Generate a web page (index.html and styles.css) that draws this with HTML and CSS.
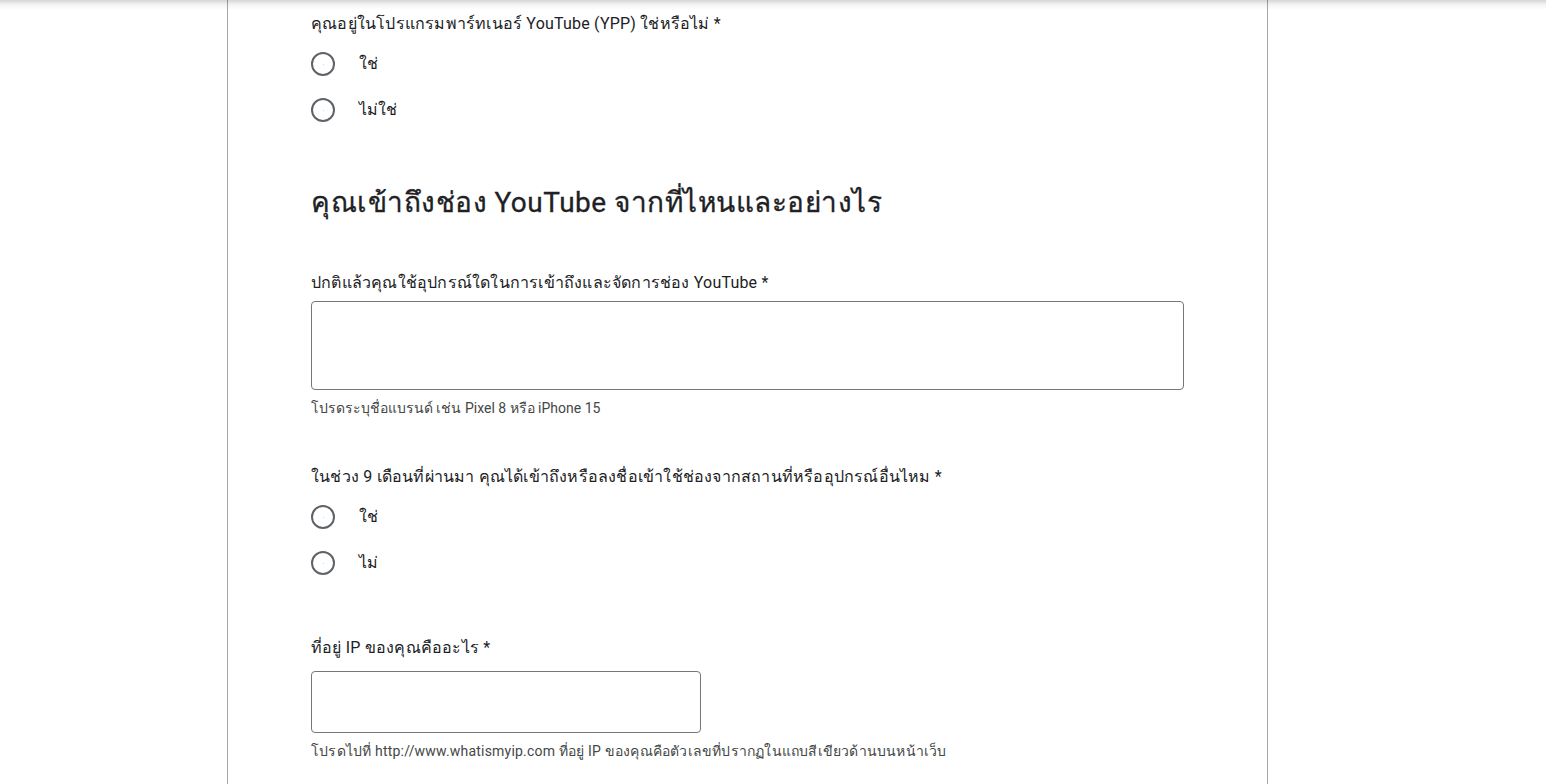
FILE: index.html
```html
<!DOCTYPE html>
<html lang="th">
<head>
<meta charset="utf-8">
<title>Form</title>
<link rel="stylesheet" href="styles.css">
</head>
<body>
<div class="topshadow"></div>
<main class="card">
  <section class="q q-first">
    <div class="q-label">คุณอยู่ในโปรแกรมพาร์ทเนอร์ YouTube (YPP) ใช่หรือไม่ *</div>
    <div class="options">
      <div class="opt"><span class="radio"></span><span class="opt-text">ใช่</span></div>
      <div class="opt"><span class="radio"></span><span class="opt-text">ไม่ใช่</span></div>
    </div>
  </section>

  <h2 class="section-title">คุณเข้าถึงช่อง YouTube จากที่ไหนและอย่างไร</h2>

  <section class="q q-after-title">
    <div class="q-label">ปกติแล้วคุณใช้อุปกรณ์ใดในการเข้าถึงและจัดการช่อง YouTube *</div>
    <div class="field field-wide"></div>
    <div class="help">โปรดระบุชื่อแบรนด์ เช่น Pixel 8 หรือ iPhone 15</div>
  </section>

  <section class="q q-after-help">
    <div class="q-label">ในช่วง 9 เดือนที่ผ่านมา คุณได้เข้าถึงหรือลงชื่อเข้าใช้ช่องจากสถานที่หรืออุปกรณ์อื่นไหม *</div>
    <div class="options">
      <div class="opt"><span class="radio"></span><span class="opt-text">ใช่</span></div>
      <div class="opt"><span class="radio"></span><span class="opt-text">ไม่</span></div>
    </div>
  </section>

  <section class="q q-after-opts">
    <div class="q-label">ที่อยู่ IP ของคุณคืออะไร *</div>
    <div class="field field-short"></div>
    <div class="help help-long">โปรดไปที่ http://www.whatismyip.com ที่อยู่ IP ของคุณคือตัวเลขที่ปรากฏในแถบสีเขียวด้านบนหน้าเว็บ</div>
  </section>
</main>
</body>
</html>
```

FILE: styles.css
```css
html, body {
  margin: 0;
  padding: 0;
  background: #ffffff;
  overflow: hidden;
}
body {
  font-family: Roboto, "Noto Sans", "DejaVu Sans", sans-serif;
  color: #202124;
  height: 784px;
}
.topshadow {
  position: fixed;
  top: 0;
  left: 0;
  right: 0;
  height: 10px;
  background: linear-gradient(to bottom, rgba(0,0,0,0.16), rgba(0,0,0,0.04) 50%, rgba(0,0,0,0));
  pointer-events: none;
}
.card {
  margin-left: 227px;
  width: 1041px;
  min-height: 784px;
  border-left: 1px solid #a6a6a6;
  border-right: 1px solid #a6a6a6;
  padding-left: 83px;
  box-sizing: border-box;
  padding-top: 12px;
}
.q-label {
  font-size: 16px;
  line-height: 24px;
  letter-spacing: 0.2px;
  color: #202124;
}
.options {
  margin-top: 5px;
}
.opt {
  display: flex;
  align-items: center;
  height: 46px;
}
.radio {
  width: 24px;
  height: 24px;
  box-sizing: border-box;
  border: 2px solid #5f6368;
  border-radius: 50%;
  flex: none;
  display: flex;
  align-items: center;
  justify-content: center;
}
.radio::after {
  content: "";
  width: 1px;
  height: 1px;
  background: #c9d6f0;
}
.opt-text {
  margin-left: 24px;
  font-size: 16px;
  line-height: 24px;
}
.section-title {
  margin: 52px 0 0 0;
  font-size: 28px;
  line-height: 36px;
  font-weight: 400;
  letter-spacing: 0.5px;
  color: #202124;
  -webkit-text-stroke: 0.3px #202124;
}
.q-after-title { margin-top: 50px; }
.q-after-help { margin-top: 47px; }
.q-after-opts { margin-top: 50px; }
.field {
  box-sizing: border-box;
  border: 1px solid #747775;
  border-radius: 4px;
}
.field-wide {
  margin-top: 6px;
  width: 873px;
  height: 89px;
}
.field-short {
  margin-top: 11px;
  width: 390px;
  height: 62px;
}
.help {
  margin-top: 8px;
  font-size: 14px;
  line-height: 20px;
  color: #444746;
}
.help-long {
  letter-spacing: 0.2px;
}
```
